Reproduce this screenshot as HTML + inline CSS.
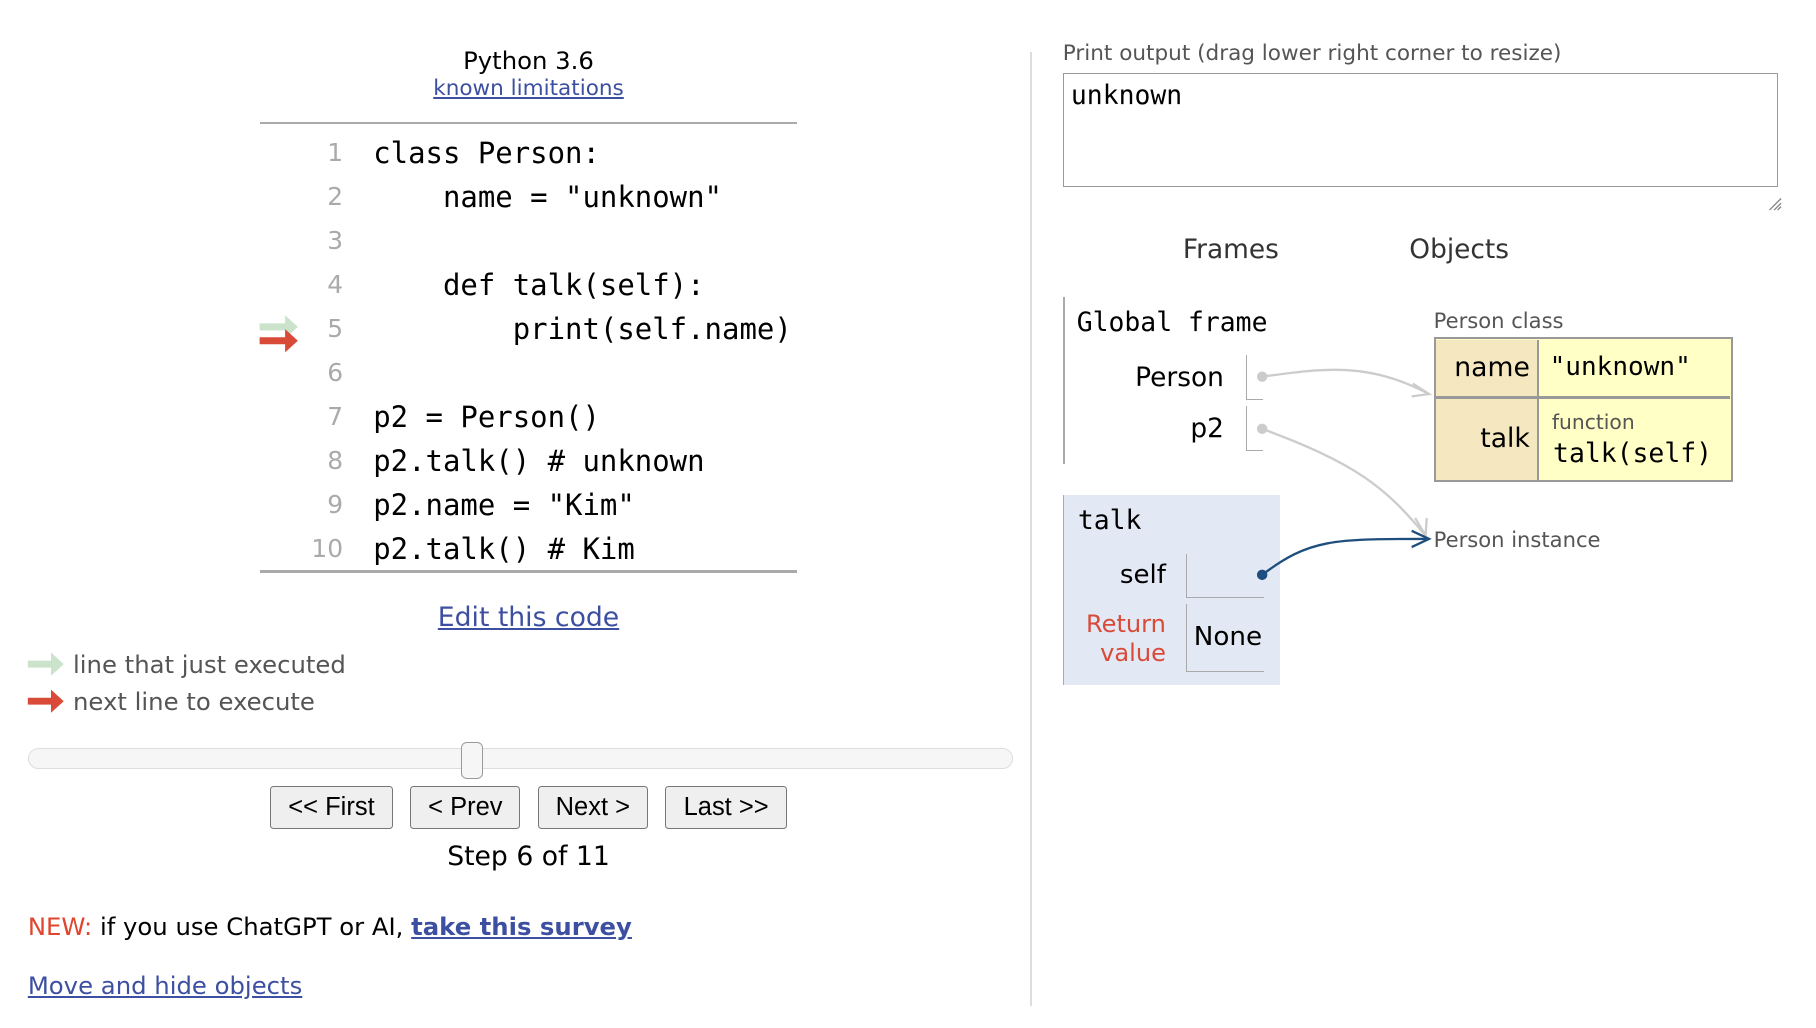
<!DOCTYPE html>
<html><head><meta charset="utf-8">
<style>
html,body{margin:0;padding:0;background:#fff;overflow:hidden;}
#w{position:relative;width:1567px;height:887px;zoom:1.159;font-family:"DejaVu Sans","Liberation Sans",sans-serif;color:#000;}
.a{position:absolute;white-space:pre;}
.m{font-family:"DejaVu Sans Mono","Liberation Mono",monospace;}
.lnk{color:#3d4fa1;text-decoration:underline;}
.ln{position:absolute;width:40px;text-align:right;color:#aaa;font-size:21.5px;line-height:30px;left:256px;}
.cd{position:absolute;left:322px;font-size:25px;line-height:30px;white-space:pre;}
.btn{position:absolute;top:678px;border:1px solid #777;border-radius:3px;background:#efefef;font-family:"Liberation Sans",Arial,sans-serif;font-size:22px;line-height:35px;text-align:center;box-sizing:border-box;height:37px;}
.hr{position:absolute;left:224px;width:464px;height:2px;background:#aaa;}
</style></head><body><div id="w">
<div class="a" style="left:336px;width:240px;text-align:center;top:40px;font-size:21px;">Python 3.6</div>
<div class="a lnk" style="left:336px;width:240px;text-align:center;top:66px;font-size:18.6px;">known limitations</div>
<div class="hr" style="top:105px"></div>
<div class="hr" style="top:492px"></div>

<div class="ln" style="top:117px">1</div><div class="cd m" style="top:117px">class Person:</div>
<div class="ln" style="top:155px">2</div><div class="cd m" style="top:155px">    name = "unknown"</div>
<div class="ln" style="top:193px">3</div>
<div class="ln" style="top:231px">4</div><div class="cd m" style="top:231px">    def talk(self):</div>
<div class="ln" style="top:269px">5</div><div class="cd m" style="top:269px">        print(self.name)</div>
<div class="ln" style="top:307px">6</div>
<div class="ln" style="top:345px">7</div><div class="cd m" style="top:345px">p2 = Person()</div>
<div class="ln" style="top:383px">8</div><div class="cd m" style="top:383px">p2.talk() # unknown</div>
<div class="ln" style="top:421px">9</div><div class="cd m" style="top:421px">p2.name = "Kim"</div>
<div class="ln" style="top:459px">10</div><div class="cd m" style="top:459px">p2.talk() # Kim</div>

<svg class="a" style="left:0;top:0" width="900" height="883">
 <path d="M224 279h22v-7l11 10-11 10v-7h-22z" fill="#cbe3cb"/>
 <path d="M224 291h22v-7l11 10-11 10v-7h-22z" fill="#d94a38"/>
 <path d="M24 570h20v-7l11 10-11 10v-7h-20z" fill="#cbe3cb"/>
 <path d="M24 602h20v-7l11 10-11 10v-7h-20z" fill="#d94a38"/>
</svg>

<div class="a lnk" style="left:316px;width:280px;text-align:center;top:519px;font-size:23px;">Edit this code</div>
<div class="a" style="left:63px;top:561px;font-size:21px;color:#555;">line that just executed</div>
<div class="a" style="left:63px;top:593px;font-size:21px;color:#555;">next line to execute</div>

<div class="a" style="left:24px;top:645px;width:848px;height:17px;border:1px solid #ddd;border-radius:9px;background:#f6f6f6;"></div>
<div class="a" style="left:398px;top:640px;width:17px;height:30px;border:1px solid #999;border-radius:5px;background:#f6f6f6;"></div>

<div class="btn" style="left:233px;width:106px;">&lt;&lt; First</div>
<div class="btn" style="left:354px;width:95px;">&lt; Prev</div>
<div class="btn" style="left:464px;width:95px;">Next &gt;</div>
<div class="btn" style="left:574px;width:105px;">Last &gt;&gt;</div>
<div class="a" style="left:316px;width:280px;text-align:center;top:726px;font-size:23px;">Step 6 of 11</div>
<div class="a" style="left:24px;top:787px;font-size:21px;"><span style="color:#e0452f">NEW:</span> if you use ChatGPT or AI, <b class="lnk">take this survey</b></div>
<div class="a lnk" style="left:24px;top:838px;font-size:21px;">Move and hide objects</div>

<div class="a" style="left:889px;top:45px;width:1px;height:823px;background:#ddd;"></div>

<div class="a" style="left:917px;top:35px;font-size:18.6px;color:#555;">Print output (drag lower right corner to resize)</div>
<div class="a" style="left:917px;top:63px;width:615px;height:97px;border:1.5px solid #999;"></div>
<div class="a m" style="left:924px;top:69px;font-size:22.8px;">unknown</div>
<svg class="a" style="left:1524px;top:168px" width="14" height="14"><path d="M3 13L13 3M7 13L13 7M10 13l3-3" stroke="#888" stroke-width="1.2"/></svg>

<div class="a" style="left:992px;width:140px;text-align:center;top:202px;font-size:22.8px;color:#333;">Frames</div>
<div class="a" style="left:1190px;width:138px;text-align:center;top:202px;font-size:22.8px;color:#333;">Objects</div>

<div class="a" style="left:917px;top:256px;width:1.5px;height:144px;background:#aaa;"></div>
<div class="a m" style="left:929px;top:265px;font-size:22.8px;">Global frame</div>
<div class="a" style="left:926px;width:130px;text-align:right;top:312px;font-size:22.8px;">Person</div>
<div class="a" style="left:926px;width:130px;text-align:right;top:356px;font-size:22.8px;">p2</div>
<div class="a" style="left:1075px;top:306px;width:14px;height:38px;border-left:1.5px solid #aaa;border-bottom:1.5px solid #aaa;"></div>
<div class="a" style="left:1075px;top:350px;width:14px;height:38px;border-left:1.5px solid #aaa;border-bottom:1.5px solid #aaa;"></div>

<div class="a" style="left:917px;top:427px;width:187px;height:164px;background:#e3e9f4;border-left:1.5px solid #aaa;box-sizing:border-box;"></div>
<div class="a m" style="left:930px;top:436px;font-size:22.8px;">talk</div>
<div class="a" style="left:896px;width:110px;text-align:right;top:483px;font-size:22.5px;">self</div>
<div class="a" style="left:896px;width:110px;text-align:right;top:526px;font-size:20.8px;line-height:25px;color:#d94a38;white-space:normal;">Return value</div>
<div class="a" style="left:1023px;top:478px;width:67px;height:37px;border-left:1.5px solid #aaa;border-bottom:1.5px solid #aaa;"></div>
<div class="a" style="left:1023px;top:521px;width:67px;height:58px;border-left:1.5px solid #aaa;border-bottom:1.5px solid #aaa;"></div>
<div class="a" style="left:1030px;top:537px;font-size:22.6px;">None</div>

<div class="a" style="left:1237px;top:266px;font-size:18.2px;color:#555;">Person class</div>
<div class="a" style="left:1237px;top:291px;width:258px;height:125px;border:2px solid #999;box-sizing:border-box;background:#ffffc6;"></div>
<div class="a" style="left:1239px;top:293px;width:89px;height:121px;background:#f5e8c0;border-right:2px solid #999;box-sizing:border-box;"></div>
<div class="a" style="left:1239px;top:342px;width:254px;height:2px;background:#999;"></div>
<div class="a" style="left:1210px;width:110px;text-align:right;top:304px;font-size:23px;">name</div>
<div class="a m" style="left:1337px;top:304px;font-size:22.5px;">"unknown"</div>
<div class="a" style="left:1210px;width:110px;text-align:right;top:365px;font-size:23px;">talk</div>
<div class="a" style="left:1339px;top:354px;font-size:17.5px;color:#555;">function</div>
<div class="a m" style="left:1340px;top:378px;font-size:22.8px;">talk(self)</div>
<div class="a" style="left:1237px;top:455px;font-size:18.2px;color:#555;">Person instance</div>

<svg class="a" style="left:0;top:0" width="1560" height="883">
 <circle cx="1089" cy="325" r="4.5" fill="#ccc"/>
 <circle cx="1089" cy="370" r="4.5" fill="#ccc"/>
 <path d="M1089 325C1140 318 1180 312 1231 339" stroke="#ccc" stroke-width="2" fill="none"/>
 <path d="M1219 331L1233 340L1218 342" stroke="#ccc" stroke-width="2" fill="none"/>
 <path d="M1089 370C1170 400 1195 420 1229 461" stroke="#ccc" stroke-width="2" fill="none"/>
 <path d="M1221 447L1230 462L1231 447" stroke="#ccc" stroke-width="2" fill="none"/>
 <circle cx="1089" cy="496" r="4.5" fill="#1e4e7e"/>
 <path d="M1089 496C1130 465 1150 465 1231 465" stroke="#1e4e7e" stroke-width="2" fill="none"/>
 <path d="M1218 458L1233 465L1218 472" stroke="#1e4e7e" stroke-width="2" fill="none"/>
</svg>
</div></body></html>
